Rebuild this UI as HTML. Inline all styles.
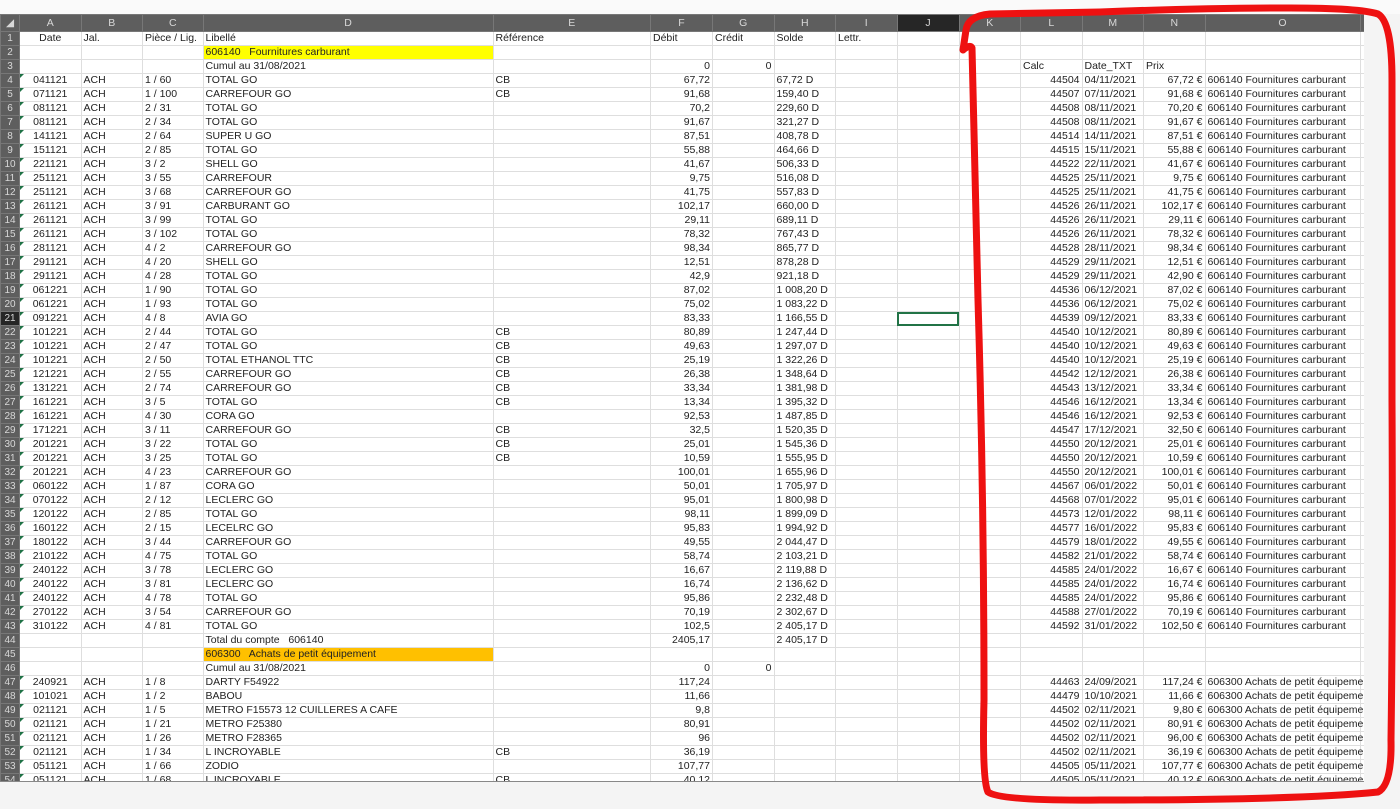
<!DOCTYPE html>
<html><head><meta charset="utf-8"><style>
body{margin:0;width:1400px;height:809px;background:#f4f4f4;overflow:hidden;font-family:"Liberation Sans",sans-serif;position:relative}
.top{position:absolute;left:0;top:0;width:1400px;height:14px;background:#fafafa}
.wrap{position:absolute;left:0;top:14px;width:1364px;height:767px;overflow:hidden;background:#fff;border-bottom:1px solid #888}
table{border-collapse:collapse;table-layout:fixed;font-size:10.5px;color:#222;width:1364px}
td,th{height:13px;line-height:13px;padding:0 2px;border:1px solid #dedede;white-space:nowrap;overflow:hidden;position:relative}
th{background:#5e5e5e;color:#d8d8d8;font-weight:normal;border-color:#777;text-align:center;padding:0}
thead th{height:16px}
tbody th{text-align:center;font-size:10px}
.r{text-align:right}.c{text-align:center}
.o{overflow:visible}
i{position:absolute;left:0;top:0;width:0;height:0;border-top:4px solid #1e7145;border-right:4px solid transparent}
.y{background:#ffff00}.or{background:#ffc000}
.sel{outline:2px solid #217346;outline-offset:-2px}
</style></head><body>
<div class="top"></div>
<div class="wrap"><table>
<colgroup><col style="width:19px"><col style="width:61.5px"><col style="width:61.5px"><col style="width:60.5px"><col style="width:290px"><col style="width:157.5px"><col style="width:62px"><col style="width:61.5px"><col style="width:61.5px"><col style="width:61.5px"><col style="width:62px"><col style="width:61.5px"><col style="width:61.5px"><col style="width:61.5px"><col style="width:61.5px"><col style="width:155px"><col style="width:10px"></colgroup>
<thead><tr><th>◢</th><th>A</th><th>B</th><th>C</th><th>D</th><th>E</th><th>F</th><th>G</th><th>H</th><th>I</th><th style="background:#262626">J</th><th>K</th><th>L</th><th>M</th><th>N</th><th>O</th><th></th></tr></thead>
<tbody>
<tr><th>1</th><td class=c>Date</td><td>Jal.</td><td>Pièce / Lig.</td><td>Libellé</td><td>Référence</td><td>Débit</td><td>Crédit</td><td>Solde</td><td>Lettr.</td><td></td><td></td><td></td><td></td><td></td><td></td><td></td></tr>
<tr><th>2</th><td></td><td></td><td></td><td class=y>606140&nbsp;&nbsp; Fournitures carburant</td><td></td><td></td><td></td><td></td><td></td><td></td><td></td><td></td><td></td><td></td><td></td><td></td></tr>
<tr><th>3</th><td></td><td></td><td></td><td>Cumul au 31/08/2021</td><td></td><td class=r>0</td><td class=r>0</td><td></td><td></td><td></td><td></td><td>Calc</td><td>Date_TXT</td><td>Prix</td><td></td><td></td></tr>
<tr><th>4</th><td class=c><i></i>041121</td><td>ACH</td><td>1 / 60</td><td>TOTAL GO</td><td>CB</td><td class=r>67,72</td><td></td><td>67,72 D</td><td></td><td></td><td></td><td class=r>44504</td><td>04/11/2021</td><td class=r>67,72 €</td><td>606140 Fournitures carburant</td><td></td></tr>
<tr><th>5</th><td class=c><i></i>071121</td><td>ACH</td><td>1 / 100</td><td>CARREFOUR GO</td><td>CB</td><td class=r>91,68</td><td></td><td>159,40 D</td><td></td><td></td><td></td><td class=r>44507</td><td>07/11/2021</td><td class=r>91,68 €</td><td>606140 Fournitures carburant</td><td></td></tr>
<tr><th>6</th><td class=c><i></i>081121</td><td>ACH</td><td>2 / 31</td><td>TOTAL GO</td><td></td><td class=r>70,2</td><td></td><td>229,60 D</td><td></td><td></td><td></td><td class=r>44508</td><td>08/11/2021</td><td class=r>70,20 €</td><td>606140 Fournitures carburant</td><td></td></tr>
<tr><th>7</th><td class=c><i></i>081121</td><td>ACH</td><td>2 / 34</td><td>TOTAL GO</td><td></td><td class=r>91,67</td><td></td><td>321,27 D</td><td></td><td></td><td></td><td class=r>44508</td><td>08/11/2021</td><td class=r>91,67 €</td><td>606140 Fournitures carburant</td><td></td></tr>
<tr><th>8</th><td class=c><i></i>141121</td><td>ACH</td><td>2 / 64</td><td>SUPER U GO</td><td></td><td class=r>87,51</td><td></td><td>408,78 D</td><td></td><td></td><td></td><td class=r>44514</td><td>14/11/2021</td><td class=r>87,51 €</td><td>606140 Fournitures carburant</td><td></td></tr>
<tr><th>9</th><td class=c><i></i>151121</td><td>ACH</td><td>2 / 85</td><td>TOTAL GO</td><td></td><td class=r>55,88</td><td></td><td>464,66 D</td><td></td><td></td><td></td><td class=r>44515</td><td>15/11/2021</td><td class=r>55,88 €</td><td>606140 Fournitures carburant</td><td></td></tr>
<tr><th>10</th><td class=c><i></i>221121</td><td>ACH</td><td>3 / 2</td><td>SHELL GO</td><td></td><td class=r>41,67</td><td></td><td>506,33 D</td><td></td><td></td><td></td><td class=r>44522</td><td>22/11/2021</td><td class=r>41,67 €</td><td>606140 Fournitures carburant</td><td></td></tr>
<tr><th>11</th><td class=c><i></i>251121</td><td>ACH</td><td>3 / 55</td><td>CARREFOUR</td><td></td><td class=r>9,75</td><td></td><td>516,08 D</td><td></td><td></td><td></td><td class=r>44525</td><td>25/11/2021</td><td class=r>9,75 €</td><td>606140 Fournitures carburant</td><td></td></tr>
<tr><th>12</th><td class=c><i></i>251121</td><td>ACH</td><td>3 / 68</td><td>CARREFOUR GO</td><td></td><td class=r>41,75</td><td></td><td>557,83 D</td><td></td><td></td><td></td><td class=r>44525</td><td>25/11/2021</td><td class=r>41,75 €</td><td>606140 Fournitures carburant</td><td></td></tr>
<tr><th>13</th><td class=c><i></i>261121</td><td>ACH</td><td>3 / 91</td><td>CARBURANT GO</td><td></td><td class=r>102,17</td><td></td><td>660,00 D</td><td></td><td></td><td></td><td class=r>44526</td><td>26/11/2021</td><td class=r>102,17 €</td><td>606140 Fournitures carburant</td><td></td></tr>
<tr><th>14</th><td class=c><i></i>261121</td><td>ACH</td><td>3 / 99</td><td>TOTAL GO</td><td></td><td class=r>29,11</td><td></td><td>689,11 D</td><td></td><td></td><td></td><td class=r>44526</td><td>26/11/2021</td><td class=r>29,11 €</td><td>606140 Fournitures carburant</td><td></td></tr>
<tr><th>15</th><td class=c><i></i>261121</td><td>ACH</td><td>3 / 102</td><td>TOTAL GO</td><td></td><td class=r>78,32</td><td></td><td>767,43 D</td><td></td><td></td><td></td><td class=r>44526</td><td>26/11/2021</td><td class=r>78,32 €</td><td>606140 Fournitures carburant</td><td></td></tr>
<tr><th>16</th><td class=c><i></i>281121</td><td>ACH</td><td>4 / 2</td><td>CARREFOUR GO</td><td></td><td class=r>98,34</td><td></td><td>865,77 D</td><td></td><td></td><td></td><td class=r>44528</td><td>28/11/2021</td><td class=r>98,34 €</td><td>606140 Fournitures carburant</td><td></td></tr>
<tr><th>17</th><td class=c><i></i>291121</td><td>ACH</td><td>4 / 20</td><td>SHELL GO</td><td></td><td class=r>12,51</td><td></td><td>878,28 D</td><td></td><td></td><td></td><td class=r>44529</td><td>29/11/2021</td><td class=r>12,51 €</td><td>606140 Fournitures carburant</td><td></td></tr>
<tr><th>18</th><td class=c><i></i>291121</td><td>ACH</td><td>4 / 28</td><td>TOTAL GO</td><td></td><td class=r>42,9</td><td></td><td>921,18 D</td><td></td><td></td><td></td><td class=r>44529</td><td>29/11/2021</td><td class=r>42,90 €</td><td>606140 Fournitures carburant</td><td></td></tr>
<tr><th>19</th><td class=c><i></i>061221</td><td>ACH</td><td>1 / 90</td><td>TOTAL GO</td><td></td><td class=r>87,02</td><td></td><td>1 008,20 D</td><td></td><td></td><td></td><td class=r>44536</td><td>06/12/2021</td><td class=r>87,02 €</td><td>606140 Fournitures carburant</td><td></td></tr>
<tr><th>20</th><td class=c><i></i>061221</td><td>ACH</td><td>1 / 93</td><td>TOTAL GO</td><td></td><td class=r>75,02</td><td></td><td>1 083,22 D</td><td></td><td></td><td></td><td class=r>44536</td><td>06/12/2021</td><td class=r>75,02 €</td><td>606140 Fournitures carburant</td><td></td></tr>
<tr><th style="background:#262626">21</th><td class=c><i></i>091221</td><td>ACH</td><td>4 / 8</td><td>AVIA GO</td><td></td><td class=r>83,33</td><td></td><td>1 166,55 D</td><td></td><td class=sel></td><td></td><td class=r>44539</td><td>09/12/2021</td><td class=r>83,33 €</td><td>606140 Fournitures carburant</td><td></td></tr>
<tr><th>22</th><td class=c><i></i>101221</td><td>ACH</td><td>2 / 44</td><td>TOTAL GO</td><td>CB</td><td class=r>80,89</td><td></td><td>1 247,44 D</td><td></td><td></td><td></td><td class=r>44540</td><td>10/12/2021</td><td class=r>80,89 €</td><td>606140 Fournitures carburant</td><td></td></tr>
<tr><th>23</th><td class=c><i></i>101221</td><td>ACH</td><td>2 / 47</td><td>TOTAL GO</td><td>CB</td><td class=r>49,63</td><td></td><td>1 297,07 D</td><td></td><td></td><td></td><td class=r>44540</td><td>10/12/2021</td><td class=r>49,63 €</td><td>606140 Fournitures carburant</td><td></td></tr>
<tr><th>24</th><td class=c><i></i>101221</td><td>ACH</td><td>2 / 50</td><td>TOTAL ETHANOL TTC</td><td>CB</td><td class=r>25,19</td><td></td><td>1 322,26 D</td><td></td><td></td><td></td><td class=r>44540</td><td>10/12/2021</td><td class=r>25,19 €</td><td>606140 Fournitures carburant</td><td></td></tr>
<tr><th>25</th><td class=c><i></i>121221</td><td>ACH</td><td>2 / 55</td><td>CARREFOUR GO</td><td>CB</td><td class=r>26,38</td><td></td><td>1 348,64 D</td><td></td><td></td><td></td><td class=r>44542</td><td>12/12/2021</td><td class=r>26,38 €</td><td>606140 Fournitures carburant</td><td></td></tr>
<tr><th>26</th><td class=c><i></i>131221</td><td>ACH</td><td>2 / 74</td><td>CARREFOUR GO</td><td>CB</td><td class=r>33,34</td><td></td><td>1 381,98 D</td><td></td><td></td><td></td><td class=r>44543</td><td>13/12/2021</td><td class=r>33,34 €</td><td>606140 Fournitures carburant</td><td></td></tr>
<tr><th>27</th><td class=c><i></i>161221</td><td>ACH</td><td>3 / 5</td><td>TOTAL GO</td><td>CB</td><td class=r>13,34</td><td></td><td>1 395,32 D</td><td></td><td></td><td></td><td class=r>44546</td><td>16/12/2021</td><td class=r>13,34 €</td><td>606140 Fournitures carburant</td><td></td></tr>
<tr><th>28</th><td class=c><i></i>161221</td><td>ACH</td><td>4 / 30</td><td>CORA GO</td><td></td><td class=r>92,53</td><td></td><td>1 487,85 D</td><td></td><td></td><td></td><td class=r>44546</td><td>16/12/2021</td><td class=r>92,53 €</td><td>606140 Fournitures carburant</td><td></td></tr>
<tr><th>29</th><td class=c><i></i>171221</td><td>ACH</td><td>3 / 11</td><td>CARREFOUR GO</td><td>CB</td><td class=r>32,5</td><td></td><td>1 520,35 D</td><td></td><td></td><td></td><td class=r>44547</td><td>17/12/2021</td><td class=r>32,50 €</td><td>606140 Fournitures carburant</td><td></td></tr>
<tr><th>30</th><td class=c><i></i>201221</td><td>ACH</td><td>3 / 22</td><td>TOTAL GO</td><td>CB</td><td class=r>25,01</td><td></td><td>1 545,36 D</td><td></td><td></td><td></td><td class=r>44550</td><td>20/12/2021</td><td class=r>25,01 €</td><td>606140 Fournitures carburant</td><td></td></tr>
<tr><th>31</th><td class=c><i></i>201221</td><td>ACH</td><td>3 / 25</td><td>TOTAL GO</td><td>CB</td><td class=r>10,59</td><td></td><td>1 555,95 D</td><td></td><td></td><td></td><td class=r>44550</td><td>20/12/2021</td><td class=r>10,59 €</td><td>606140 Fournitures carburant</td><td></td></tr>
<tr><th>32</th><td class=c><i></i>201221</td><td>ACH</td><td>4 / 23</td><td>CARREFOUR GO</td><td></td><td class=r>100,01</td><td></td><td>1 655,96 D</td><td></td><td></td><td></td><td class=r>44550</td><td>20/12/2021</td><td class=r>100,01 €</td><td>606140 Fournitures carburant</td><td></td></tr>
<tr><th>33</th><td class=c><i></i>060122</td><td>ACH</td><td>1 / 87</td><td>CORA GO</td><td></td><td class=r>50,01</td><td></td><td>1 705,97 D</td><td></td><td></td><td></td><td class=r>44567</td><td>06/01/2022</td><td class=r>50,01 €</td><td>606140 Fournitures carburant</td><td></td></tr>
<tr><th>34</th><td class=c><i></i>070122</td><td>ACH</td><td>2 / 12</td><td>LECLERC GO</td><td></td><td class=r>95,01</td><td></td><td>1 800,98 D</td><td></td><td></td><td></td><td class=r>44568</td><td>07/01/2022</td><td class=r>95,01 €</td><td>606140 Fournitures carburant</td><td></td></tr>
<tr><th>35</th><td class=c><i></i>120122</td><td>ACH</td><td>2 / 85</td><td>TOTAL GO</td><td></td><td class=r>98,11</td><td></td><td>1 899,09 D</td><td></td><td></td><td></td><td class=r>44573</td><td>12/01/2022</td><td class=r>98,11 €</td><td>606140 Fournitures carburant</td><td></td></tr>
<tr><th>36</th><td class=c><i></i>160122</td><td>ACH</td><td>2 / 15</td><td>LECELRC GO</td><td></td><td class=r>95,83</td><td></td><td>1 994,92 D</td><td></td><td></td><td></td><td class=r>44577</td><td>16/01/2022</td><td class=r>95,83 €</td><td>606140 Fournitures carburant</td><td></td></tr>
<tr><th>37</th><td class=c><i></i>180122</td><td>ACH</td><td>3 / 44</td><td>CARREFOUR GO</td><td></td><td class=r>49,55</td><td></td><td>2 044,47 D</td><td></td><td></td><td></td><td class=r>44579</td><td>18/01/2022</td><td class=r>49,55 €</td><td>606140 Fournitures carburant</td><td></td></tr>
<tr><th>38</th><td class=c><i></i>210122</td><td>ACH</td><td>4 / 75</td><td>TOTAL GO</td><td></td><td class=r>58,74</td><td></td><td>2 103,21 D</td><td></td><td></td><td></td><td class=r>44582</td><td>21/01/2022</td><td class=r>58,74 €</td><td>606140 Fournitures carburant</td><td></td></tr>
<tr><th>39</th><td class=c><i></i>240122</td><td>ACH</td><td>3 / 78</td><td>LECLERC GO</td><td></td><td class=r>16,67</td><td></td><td>2 119,88 D</td><td></td><td></td><td></td><td class=r>44585</td><td>24/01/2022</td><td class=r>16,67 €</td><td>606140 Fournitures carburant</td><td></td></tr>
<tr><th>40</th><td class=c><i></i>240122</td><td>ACH</td><td>3 / 81</td><td>LECLERC GO</td><td></td><td class=r>16,74</td><td></td><td>2 136,62 D</td><td></td><td></td><td></td><td class=r>44585</td><td>24/01/2022</td><td class=r>16,74 €</td><td>606140 Fournitures carburant</td><td></td></tr>
<tr><th>41</th><td class=c><i></i>240122</td><td>ACH</td><td>4 / 78</td><td>TOTAL GO</td><td></td><td class=r>95,86</td><td></td><td>2 232,48 D</td><td></td><td></td><td></td><td class=r>44585</td><td>24/01/2022</td><td class=r>95,86 €</td><td>606140 Fournitures carburant</td><td></td></tr>
<tr><th>42</th><td class=c><i></i>270122</td><td>ACH</td><td>3 / 54</td><td>CARREFOUR GO</td><td></td><td class=r>70,19</td><td></td><td>2 302,67 D</td><td></td><td></td><td></td><td class=r>44588</td><td>27/01/2022</td><td class=r>70,19 €</td><td>606140 Fournitures carburant</td><td></td></tr>
<tr><th>43</th><td class=c><i></i>310122</td><td>ACH</td><td>4 / 81</td><td>TOTAL GO</td><td></td><td class=r>102,5</td><td></td><td>2 405,17 D</td><td></td><td></td><td></td><td class=r>44592</td><td>31/01/2022</td><td class=r>102,50 €</td><td>606140 Fournitures carburant</td><td></td></tr>
<tr><th>44</th><td></td><td></td><td></td><td>Total du compte&nbsp;&nbsp; 606140</td><td></td><td class=r>2405,17</td><td></td><td>2 405,17 D</td><td></td><td></td><td></td><td></td><td></td><td></td><td></td><td></td></tr>
<tr><th>45</th><td></td><td></td><td></td><td class=or>606300&nbsp;&nbsp; Achats de petit équipement</td><td></td><td></td><td></td><td></td><td></td><td></td><td></td><td></td><td></td><td></td><td></td><td></td></tr>
<tr><th>46</th><td></td><td></td><td></td><td>Cumul au 31/08/2021</td><td></td><td class=r>0</td><td class=r>0</td><td></td><td></td><td></td><td></td><td></td><td></td><td></td><td></td><td></td></tr>
<tr><th>47</th><td class=c><i></i>240921</td><td>ACH</td><td>1 / 8</td><td>DARTY F54922</td><td></td><td class=r>117,24</td><td></td><td></td><td></td><td></td><td></td><td class=r>44463</td><td>24/09/2021</td><td class=r>117,24 €</td><td class=o>606300 Achats de petit équipement</td><td></td></tr>
<tr><th>48</th><td class=c><i></i>101021</td><td>ACH</td><td>1 / 2</td><td>BABOU</td><td></td><td class=r>11,66</td><td></td><td></td><td></td><td></td><td></td><td class=r>44479</td><td>10/10/2021</td><td class=r>11,66 €</td><td class=o>606300 Achats de petit équipement</td><td></td></tr>
<tr><th>49</th><td class=c><i></i>021121</td><td>ACH</td><td>1 / 5</td><td>METRO F15573 12 CUILLERES A CAFE</td><td></td><td class=r>9,8</td><td></td><td></td><td></td><td></td><td></td><td class=r>44502</td><td>02/11/2021</td><td class=r>9,80 €</td><td class=o>606300 Achats de petit équipement</td><td></td></tr>
<tr><th>50</th><td class=c><i></i>021121</td><td>ACH</td><td>1 / 21</td><td>METRO F25380</td><td></td><td class=r>80,91</td><td></td><td></td><td></td><td></td><td></td><td class=r>44502</td><td>02/11/2021</td><td class=r>80,91 €</td><td class=o>606300 Achats de petit équipement</td><td></td></tr>
<tr><th>51</th><td class=c><i></i>021121</td><td>ACH</td><td>1 / 26</td><td>METRO F28365</td><td></td><td class=r>96</td><td></td><td></td><td></td><td></td><td></td><td class=r>44502</td><td>02/11/2021</td><td class=r>96,00 €</td><td class=o>606300 Achats de petit équipement</td><td></td></tr>
<tr><th>52</th><td class=c><i></i>021121</td><td>ACH</td><td>1 / 34</td><td>L INCROYABLE</td><td>CB</td><td class=r>36,19</td><td></td><td></td><td></td><td></td><td></td><td class=r>44502</td><td>02/11/2021</td><td class=r>36,19 €</td><td class=o>606300 Achats de petit équipement</td><td></td></tr>
<tr><th>53</th><td class=c><i></i>051121</td><td>ACH</td><td>1 / 66</td><td>ZODIO</td><td></td><td class=r>107,77</td><td></td><td></td><td></td><td></td><td></td><td class=r>44505</td><td>05/11/2021</td><td class=r>107,77 €</td><td class=o>606300 Achats de petit équipement</td><td></td></tr>
<tr><th>54</th><td class=c><i></i>051121</td><td>ACH</td><td>1 / 68</td><td>L INCROYABLE</td><td>CB</td><td class=r>40,12</td><td></td><td></td><td></td><td></td><td></td><td class=r>44505</td><td>05/11/2021</td><td class=r>40,12 €</td><td class=o>606300 Achats de petit équipement</td><td></td></tr>
</tbody></table></div>
<svg width="1400" height="809" style="position:absolute;left:0;top:0" viewBox="0 0 1400 809">
<path d="M963 50 L966 30 Q968 16 990 14 L1100 12 Q1200 8 1290 8 Q1360 8 1378 14 Q1392 22 1392 80 L1392 400 Q1393 600 1391 740 Q1392 785 1378 792 Q1300 800 1100 800 Q1000 801 988 792 Q982 780 984 700 Q984 500 978 300 L972 48 Q970 44 963 50" fill="none" stroke="#ee1111" stroke-width="7" stroke-linejoin="round" stroke-linecap="round"/>
</svg>
</body></html>
